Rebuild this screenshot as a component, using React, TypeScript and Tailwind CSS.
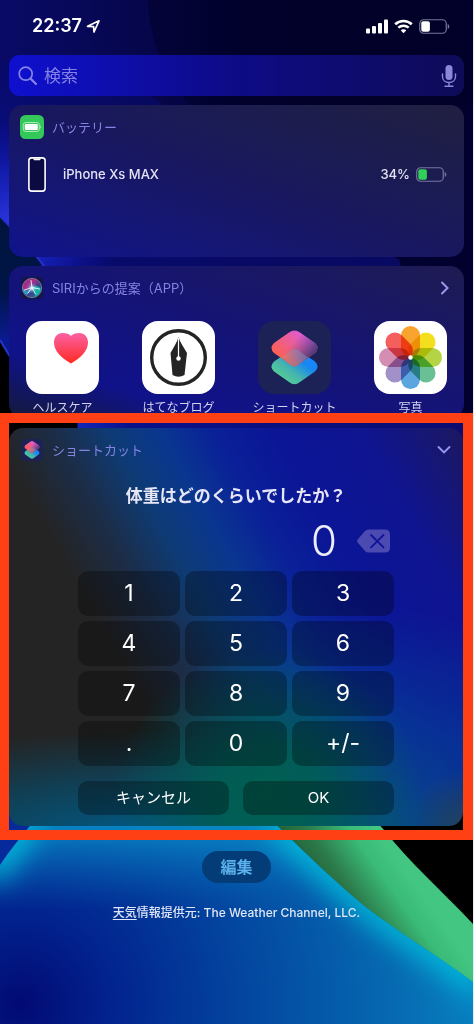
import { useState, type ReactNode } from "react";

const keys = ["1", "2", "3", "4", "5", "6", "7", "8", "9", ".", "0", "+/-"];

const petals = ["#f89c1c", "#f3dd0b", "#aed136", "#5dbb8c", "#4d9fdc", "#9a86c4", "#d183ad", "#f4504f"];

function Wallpaper() {
  return (
    <svg
      className="absolute inset-0 h-full w-full"
      viewBox="0 0 474 1024"
      preserveAspectRatio="none"
      aria-hidden="true"
    >
      <defs>
        <linearGradient id="sky" x1="0" y1="0" x2="1" y2="0">
          <stop offset="0" stopColor="#080a66" />
          <stop offset="0.3" stopColor="#06064c" />
          <stop offset="0.55" stopColor="#020232" />
          <stop offset="1" stopColor="#02012e" />
        </linearGradient>
        <linearGradient id="ridge" gradientUnits="userSpaceOnUse" x1="0" y1="60" x2="0" y2="260">
          <stop offset="0" stopColor="#0a12a0" stopOpacity="0" />
          <stop offset="0.6" stopColor="#080c80" />
          <stop offset="1" stopColor="#090c74" />
        </linearGradient>
        <radialGradient id="rim" gradientUnits="userSpaceOnUse" cx="10" cy="225" r="110">
          <stop offset="0" stopColor="#2c36e2" />
          <stop offset="0.5" stopColor="#1520b8" stopOpacity="0.8" />
          <stop offset="1" stopColor="#0a10a0" stopOpacity="0" />
        </radialGradient>
        <linearGradient id="inner" gradientUnits="userSpaceOnUse" x1="0" y1="215" x2="0" y2="430">
          <stop offset="0" stopColor="#00143c" />
          <stop offset="0.35" stopColor="#001548" />
          <stop offset="0.58" stopColor="#0a1a90" />
          <stop offset="1" stopColor="#0a1fa8" />
        </linearGradient>
        <radialGradient id="dome" gradientUnits="userSpaceOnUse" cx="20" cy="1005" r="460">
          <stop offset="0" stopColor="#020a74" />
          <stop offset="0.2" stopColor="#02238e" />
          <stop offset="0.5" stopColor="#0347a0" />
          <stop offset="0.8" stopColor="#0668b0" />
          <stop offset="1" stopColor="#0780c0" />
        </radialGradient>
        <linearGradient id="leaf" gradientUnits="userSpaceOnUse" x1="325" y1="905" x2="395" y2="855">
          <stop offset="0" stopColor="#1f5c35" />
          <stop offset="0.35" stopColor="#2c7a4a" />
          <stop offset="0.75" stopColor="#3abb77" />
          <stop offset="1" stopColor="#42c682" />
        </linearGradient>
        <linearGradient id="crest" gradientUnits="userSpaceOnUse" x1="0" y1="826" x2="0" y2="910">
          <stop offset="0" stopColor="#0a9ad0" stopOpacity="0.75" />
          <stop offset="1" stopColor="#0668b8" stopOpacity="0" />
        </linearGradient>
        <clipPath id="domeClip">
          <path d="M0 865 C10 850 20 838 30 826 L70 780 H230 L278 826 C315 862 350 895 377 915 C410 939 445 960 474 982 V1024 H0Z" />
        </clipPath>
        <filter id="soft" x="-20%" y="-20%" width="140%" height="140%">
          <feGaussianBlur stdDeviation="14" />
        </filter>
      </defs>
      <rect width="474" height="1024" fill="#000" />
      <rect width="474" height="430" fill="url(#sky)" />
      <path d="M148 0 C150 40 165 75 190 105 H474 V0Z" fill="#000020" opacity="0.4" />
      <path d="M0 0 H60 C130 100 280 190 400 260 L450 430 H0Z" fill="url(#ridge)" opacity="0.75" />
      <rect width="160" height="430" fill="url(#rim)" />
      <path d="M0 216 C15 232 30 248 40 261 C60 320 75 390 90 430 H0Z" fill="url(#inner)" />
      <path d="M0 216 C15 232 30 248 46 268" fill="none" stroke="#2630d0" strokeWidth="2" />
      <path d="M0 340 L12 360 L78 428 V440 H0Z" fill="#000" />
      <path d="M0 340 L12 360" stroke="#2436c8" strokeWidth="2" />
      <path d="M0 810 H45 L0 868Z" fill="#062a9c" />
      <path d="M260 810 H366 L384 829 C410 862 445 893 474 924 V990 L370 920 L300 860Z" fill="url(#leaf)" />
      <g clipPath="url(#domeClip)">
        <rect y="780" width="474" height="244" fill="url(#dome)" />
        <rect y="780" width="474" height="140" fill="url(#crest)" />
        <path
          d="M-10 875 L30 818 M276 820 C315 858 350 891 377 911 C410 935 445 956 484 986"
          fill="none"
          stroke="#00c0de"
          strokeWidth="26"
          filter="url(#soft)"
        />
      </g>
    </svg>
  );
}

function BatteryIcon({ fill, outline }: { fill: string; outline: string }) {
  return (
    <svg className="h-[15px] w-[31px]" viewBox="0 0 31 15" aria-hidden="true">
      <rect x="0.75" y="0.75" width="26.5" height="13.5" rx="3.8" fill="none" stroke={outline} strokeWidth="1.2" />
      <rect x="2.3" y="2.3" width="8.6" height="10.4" rx="2" fill={fill} />
      <path d="M28.7 5v5c1-.4 1.6-1.4 1.6-2.5S29.7 5.4 28.7 5Z" fill={outline} />
    </svg>
  );
}

function StatusBar() {
  return (
    <div className="flex h-[55px] items-start justify-between pt-[14px] pr-[23px] pl-8">
      <div className="flex items-center gap-1 text-[18px] leading-6 font-semibold text-white">
        <span>22:37</span>
        <svg className="h-[15px] w-[15px]" viewBox="0 0 15 15" aria-hidden="true">
          <path d="M1.6 7.3 L13 1.8 L8 13 L7.6 7.7Z" fill="none" stroke="#fff" strokeWidth="1.7" strokeLinejoin="round" />
        </svg>
      </div>
      <div className="flex h-6 items-center gap-[6px]">
        <svg className="h-[15px] w-[22px]" viewBox="0 0 22 15" fill="#fff" aria-hidden="true">
          <rect x="0" y="9.5" width="4" height="5" rx="1" />
          <rect x="6" y="7" width="4" height="7.5" rx="1" />
          <rect x="12" y="4" width="4" height="10.5" rx="1" />
          <rect x="18" y="0.5" width="4" height="14" rx="1" />
        </svg>
        <svg className="h-[15px] w-[19px]" viewBox="0 0 19 15" fill="none" stroke="#fff" aria-hidden="true">
          <path d="M1.2 5.2 C5.9 0.9 13.1 0.9 17.8 5.2" strokeWidth="2.7" />
          <path d="M4.3 8.6 C7.3 6 11.7 6 14.7 8.6" strokeWidth="2.5" />
          <path d="M9.5 14.3 L6.7 11.3 C8.2 9.9 10.8 9.9 12.3 11.3Z" fill="#fff" stroke="none" />
        </svg>
        <BatteryIcon fill="#fff" outline="#77779a" />
      </div>
    </div>
  );
}

function SearchBar() {
  return (
    <div className="mx-[9px] flex h-[41px] items-center rounded-[11px] bg-linear-to-r from-[#0e10cf] via-[#0d0b85] to-[#0e0b58] pr-[7px] pl-[9px]">
      <label htmlFor="search" className="shrink-0" aria-label="検索">
        <svg className="h-5 w-5" viewBox="0 0 20 20" fill="none" stroke="#8583e6" aria-hidden="true">
          <circle cx="7.7" cy="7.7" r="6.5" strokeWidth="1.7" />
          <path d="M12.6 12.6 L18 18" strokeWidth="2.2" strokeLinecap="round" />
        </svg>
      </label>
      <input
        id="search"
        type="text"
        placeholder="検索"
        className="ml-[6px] min-w-0 flex-1 bg-transparent text-[17px] leading-6 text-white outline-none placeholder:text-[#8583e6]"
      />
      <button type="button" aria-label="音声入力">
        <svg className="h-6 w-4" viewBox="0 0 16 24" aria-hidden="true">
          <rect x="4.5" y="1" width="7" height="15" rx="3.5" fill="#8a88d8" />
          <path d="M1.5 10 V12.5 C1.5 20.5 14.5 20.5 14.5 12.5 V10 M8 18.5 V22 M4 22.2 H12" fill="none" stroke="#8a88d8" strokeWidth="1.4" strokeLinecap="round" />
        </svg>
      </button>
    </div>
  );
}

function WidgetHeader({ icon, title, action }: { icon: ReactNode; title: string; action?: ReactNode }) {
  return (
    <div className="flex h-11 items-center pr-3 pl-[11px]">
      {icon}
      <h2 className="ml-2 flex-1 text-[13px] leading-5 text-[#8583e2]">{title}</h2>
      {action}
    </div>
  );
}

function BatteryWidget() {
  return (
    <section className="mx-[9px] mt-[9px] h-[152px] rounded-[14px] bg-linear-to-tr from-[#10128c] via-[#18175f] to-[#211f40]">
      <WidgetHeader
        title="バッテリー"
        icon={
          <svg className="h-6 w-6" viewBox="0 0 24 24" aria-hidden="true">
            <rect width="24" height="24" rx="5.5" fill="#34c759" />
            <rect x="3.3" y="7.5" width="16" height="9" rx="2.5" fill="none" stroke="#b9ecc6" strokeWidth="0.9" />
            <rect x="4.8" y="9" width="13" height="6" rx="1.2" fill="#fff" />
            <path d="M20.2 10.5v3c1-.4 1-2.6 0-3Z" fill="#b9ecc6" />
          </svg>
        }
      />
      <div className="mt-2 flex h-[35px] items-center pr-[17px] pl-[19px] text-[13px] font-medium text-[#e4e3f3]">
        <svg className="h-[35px] w-[18px]" viewBox="0 0 18 35" aria-hidden="true">
          <rect x="0.9" y="0.9" width="16.2" height="33.2" rx="2.8" fill="#0b0a42" stroke="#fff" strokeWidth="1.6" />
          <path d="M5 1.5 H13 L12 3.3 H6Z" fill="#fff" />
        </svg>
        <span className="ml-[17px] flex-1">iPhone Xs MAX</span>
        <span className="mr-[6px]">34%</span>
        <BatteryIcon fill="#31d158" outline="#77759f" />
      </div>
    </section>
  );
}

function SiriIcon() {
  return (
    <svg className="h-6 w-6" viewBox="0 0 24 24" aria-hidden="true">
      <defs>
        <linearGradient id="siriRim" x1="0" y1="0" x2="1" y2="1">
          <stop offset="0" stopColor="#8a2c94" />
          <stop offset="0.35" stopColor="#b02c86" />
          <stop offset="0.6" stopColor="#3b418c" />
          <stop offset="1" stopColor="#168f98" />
        </linearGradient>
        <radialGradient id="siriGlow">
          <stop offset="0" stopColor="#fff" />
          <stop offset="0.3" stopColor="#bdeeff" stopOpacity="0.6" />
          <stop offset="1" stopColor="#2b7fc8" stopOpacity="0" />
        </radialGradient>
      </defs>
      <rect x="1" y="1" width="22" height="22" rx="5" fill="#17163c" />
      <circle cx="12" cy="12" r="9.7" fill="url(#siriRim)" stroke="#8391b8" strokeWidth="0.7" />
      <path d="M3 12 C5 16 8 15 12 12 C9 17 7 19 6 19 C3.5 17 2.8 14 3 12Z" fill="#1f9fc9" />
      <path d="M12 12 C16 9 19 10 21 13 C20 17 18 19 15.5 20.5 C15 17 14 14 12 12Z" fill="#13b5a2" />
      <circle cx="12" cy="12" r="6" fill="url(#siriGlow)" />
      <path d="M4.500 14 L12 11.500 L19.500 13 M12 12 L11 4.500 M12 12 L15.500 18 M12 12 L8 17" stroke="#eaf8ff" strokeWidth="0.9" fill="none" strokeLinecap="round" />
    </svg>
  );
}

function ShortcutsGlyph({ id }: { id: string }) {
  return (
    <>
      <defs>
        <linearGradient id={`${id}Low`} x1="0.15" y1="0.9" x2="0.85" y2="0.2">
          <stop offset="0" stopColor="#58d391" />
          <stop offset="0.4" stopColor="#46b4ad" />
          <stop offset="0.75" stopColor="#1687f2" />
          <stop offset="1" stopColor="#1b86ff" />
        </linearGradient>
        <linearGradient id={`${id}Top`} x1="0.1" y1="0.65" x2="0.7" y2="0.15">
          <stop offset="0" stopColor="#fb5f55" />
          <stop offset="0.5" stopColor="#ee5f8c" />
          <stop offset="1" stopColor="#dd5cd0" />
        </linearGradient>
        <linearGradient id={`${id}Shade`} x1="0.5" y1="0.3" x2="0.95" y2="0.6">
          <stop offset="0" stopColor="#51428c" stopOpacity="0" />
          <stop offset="1" stopColor="#3f356c" stopOpacity="0.9" />
        </linearGradient>
        <linearGradient id={`${id}Lap`} gradientUnits="userSpaceOnUse" x1="30" y1="42" x2="52" y2="30">
          <stop offset="0" stopColor="#e0786f" />
          <stop offset="0.5" stopColor="#9a7fa8" />
          <stop offset="1" stopColor="#5f6fb4" />
        </linearGradient>
      </defs>
      <path d="M16 40.5 L31.5 30 Q36.5 26 41.5 30 L57 40.5 Q62 45.5 57 50.5 L42 61 Q36.5 65.500 31 61 L16 50.500 Q11 45.500 16 40.500Z" fill={`url(#${id}Low)`} />
      <path d="M16 22 L31 11.5 Q36.5 7.5 42 11.5 L57 22 Q62 27 57 32 L42 42.5 Q36.5 48 31 42.5 L16 32 Q11 27 16 22Z" fill={`url(#${id}Top)`} />
      <path d="M16 22 L31 11.5 Q36.5 7.5 42 11.5 L57 22 Q62 27 57 32 L42 42.5 Q36.5 48 31 42.5 L16 32 Q11 27 16 22Z" fill={`url(#${id}Shade)`} />
      <path d="M23.500 36.200 L31.500 30.500 Q36.500 26 41.500 30 L50 36.500 L42 42.500 Q36.500 48 31 42.500Z" fill={`url(#${id}Lap)`} opacity="0.75" />
    </>
  );
}

function HealthIcon() {
  return (
    <svg viewBox="0 0 73 73" aria-hidden="true">
      <defs>
        <linearGradient id="heart" x1="0" y1="0" x2="0" y2="1">
          <stop offset="0" stopColor="#fb61a4" />
          <stop offset="1" stopColor="#ff2a22" />
        </linearGradient>
      </defs>
      <rect width="73" height="73" rx="16" fill="#fff" />
      <path d="M45 42.5 C35 37 28 29.5 28 21.5 C28 16 31.5 12 36.5 12 C40.5 12 43.5 13 45 15 C46.5 13 49.5 12 53.5 12 C58.5 12 62 16 62 21.5 C62 29.5 55 37 45 42.5Z" fill="url(#heart)" />
    </svg>
  );
}

function BlogIcon() {
  return (
    <svg viewBox="0 0 73 73" aria-hidden="true">
      <rect width="73" height="73" rx="16" fill="#fff" />
      <circle cx="36.5" cy="36.5" r="26.8" fill="none" stroke="#242424" strokeWidth="3.4" />
      <path d="M36.5 16 C38 21 42 27 45 32 L42.5 54 Q36.5 57.5 30.5 54 L28.5 32 C31.5 27 35 21 36.5 16Z" fill="#242424" />
      <path d="M36.5 17 V37" stroke="#fff" strokeWidth="1.2" />
      <circle cx="36.5" cy="37.5" r="2.2" fill="#fff" />
    </svg>
  );
}

function ShortcutsIcon() {
  return (
    <svg viewBox="0 0 73 73" aria-hidden="true">
      <rect width="73" height="73" rx="16" fill="#1c2156" />
      <ShortcutsGlyph id="app" />
    </svg>
  );
}

function PhotosIcon() {
  return (
    <svg viewBox="0 0 73 73" aria-hidden="true">
      <rect width="73" height="73" rx="16" fill="#fff" />
      <g className="isolate">
        {petals.map((color, idx) => (
          <rect
            key={color}
            x="27"
            y="5"
            width="19"
            height="31"
            rx="9.5"
            fill={color}
            opacity="0.92"
            transform={`rotate(${idx * 45} 36.5 36.5)`}
            className="mix-blend-multiply"
          />
        ))}
      </g>
      <circle cx="36.5" cy="36.5" r="2.2" fill="#fff" />
    </svg>
  );
}

const apps = [
  { name: "ヘルスケア", icon: <HealthIcon /> },
  { name: "はてなブログ", icon: <BlogIcon /> },
  { name: "ショートカット", icon: <ShortcutsIcon /> },
  { name: "写真", icon: <PhotosIcon /> },
];

function SuggestionsWidget() {
  return (
    <section className="mx-[9px] mt-[9px] h-[152px] overflow-hidden rounded-[14px] bg-[linear-gradient(to_top_right,#141a3a_0%,#10128a_22%,#141378_50%,#1e1b52_100%)]">
      <WidgetHeader
        title="SIRIからの提案（APP）"
        icon={<SiriIcon />}
        action={
          <button type="button" aria-label="すべて表示" className="px-[2px]">
            <svg className="h-4 w-[10px]" viewBox="0 0 10 16" fill="none" stroke="#9a98e6" strokeWidth="2" aria-hidden="true">
              <path d="M2 2.5 L7.5 8 L2 13.5" strokeLinecap="round" />
            </svg>
          </button>
        }
      />
      <ul className="mt-[11px] flex justify-between px-[17px]">
        {apps.map((app) => (
          <li key={app.name} className="w-[73px]">
            <a href="#" className="flex flex-col items-center">
              <span className="block h-[73px] w-[73px]">{app.icon}</span>
              <span className="mt-[6px] text-[12px] leading-4 whitespace-nowrap text-[#d3d2ef]">{app.name}</span>
            </a>
          </li>
        ))}
      </ul>
    </section>
  );
}

function ShortcutWidget() {
  const [value, setValue] = useState("0");

  const press = (key: string) => {
    if (key === "+/-") {
      setValue((v) => (v.startsWith("-") ? v.slice(1) : v === "0" ? v : `-${v}`));
    } else if (key === ".") {
      setValue((v) => (v.includes(".") ? v : `${v}.`));
    } else {
      setValue((v) => (v === "0" ? key : v + key));
    }
  };

  return (
    <section className="rounded-[14px] bg-[radial-gradient(ellipse_34%_36%_at_57%_92%,#006050_0%,#00604fcc_35%,#00604f00_100%),radial-gradient(ellipse_75%_28%_at_28%_104%,#005a88_0%,#00567c99_50%,#00507000_100%),radial-gradient(ellipse_12%_14%_at_100%_100%,#24405a_0%,#24405a00_100%),radial-gradient(ellipse_60%_60%_at_80%_105%,#0a4688_0%,#05449499_50%,#053c9200_100%),linear-gradient(61deg,#242424_0%,#242424_30%,#1c2d48_39%,#0e3b74_47%,#0a3690_55%,#0a2098_63%,#0b1596_72%,#0f1490_85%,#1b1860_100%)] pb-[11px]">
      <WidgetHeader
        title="ショートカット"
        icon={
          <svg className="h-6 w-6" viewBox="0 0 73 73" aria-hidden="true">
            <rect x="3" y="3" width="67" height="67" rx="15" fill="#1c2156" />
            <ShortcutsGlyph id="header" />
          </svg>
        }
        action={
          <button type="button" aria-label="折りたたむ" className="py-1">
            <svg className="h-[10px] w-[14px]" viewBox="0 0 14 10" fill="none" stroke="#9a98ee" strokeWidth="1.9" aria-hidden="true">
              <path d="M1.5 2 L7 7.5 L12.5 2" strokeLinecap="round" />
            </svg>
          </button>
        }
      />
      <p className="mt-3 text-center text-[17px] leading-6 font-semibold text-[#e7e6f7]">体重はどのくらいでしたか？</p>
      <div className="mt-[7px] flex h-[52px] items-center justify-end gap-5 pr-[73px]">
        <output className="text-[42px] leading-[52px] font-light text-[#eeedfb]">{value}</output>
        <button type="button" aria-label="削除" onClick={() => setValue((v) => (v.length > 1 ? v.slice(0, -1) : "0"))}>
          <svg className="h-6 w-[33px]" viewBox="0 0 33 24" aria-hidden="true">
            <path d="M11.5 0.5 H28 Q33 0.5 33 5.5 V18.5 Q33 23.5 28 23.5 H11.5 Q9.5 23.5 8 22 L1 14 Q-0.6 12 1 10 L8 2 Q9.5 0.5 11.5 0.5Z" fill="#4a4ab0" />
            <path d="M14 6 L26.5 18.3 M26.5 6 L14 18.3" stroke="#11149a" strokeWidth="1.8" strokeLinecap="round" />
          </svg>
        </button>
      </div>
      <div className="mt-1 grid grid-cols-3 gap-[5px] px-[69px]">
        {keys.map((key) => (
          <button
            key={key}
            type="button"
            onClick={() => press(key)}
            className="h-[45px] rounded-[10px] bg-black/30 text-[23px] leading-none text-white"
          >
            {key}
          </button>
        ))}
      </div>
      <div className="mt-[15px] grid grid-cols-2 gap-[14px] px-[69px] text-[15px] leading-6 text-white">
        <button type="button" className="h-[34px] rounded-[10px] bg-black/30" onClick={() => setValue("0")}>
          キャンセル
        </button>
        <button type="button" className="h-[34px] rounded-[10px] bg-black/30">
          OK
        </button>
      </div>
    </section>
  );
}

export default function App() {
  return (
    <main className="relative isolate min-h-screen overflow-hidden border-r border-[#e8e9f6] bg-black font-['Inter','Noto_Sans_CJK_JP',sans-serif]">
      <Wallpaper />
      <div className="relative">
        <StatusBar />
        <SearchBar />
        <BatteryWidget />
        <SuggestionsWidget />

        {/* Highlighted widget */}
        <div className="relative -mt-[5px] border-10 border-l-9 border-[#ff4015] bg-[linear-gradient(to_right,#000_0,#000_68px,#1426b8_69px,#0a128a_120px,#0a0c70_100%)] bg-[length:100%_20px] bg-no-repeat pt-[5px] pb-1">
          <ShortcutWidget />
        </div>

        <footer className="flex flex-col items-center pt-[11px] pb-24">
          <button type="button" className="h-8 rounded-full bg-[#033c76] px-[18px] text-[16px] leading-6 font-semibold text-[#5bb1ec]">
            編集
          </button>
          <p className="mt-5 text-[12px] leading-5 font-medium text-[#dfe6f6]">
            <a href="#" className="underline decoration-1 underline-offset-2">
              天気
            </a>
            情報提供元: The Weather Channel, LLC.
          </p>
        </footer>
      </div>
    </main>
  );
}
